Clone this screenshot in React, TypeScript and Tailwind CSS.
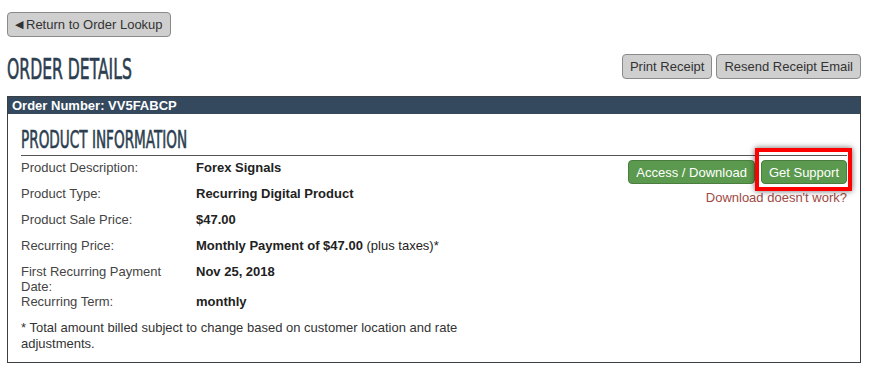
import React from 'react'

const rows: { label: string; value: React.ReactNode; tight?: boolean }[] = [
  { label: 'Product Description:', value: <b>Forex Signals</b> },
  { label: 'Product Type:', value: <b>Recurring Digital Product</b> },
  { label: 'Product Sale Price:', value: <b>$47.00</b> },
  {
    label: 'Recurring Price:',
    value: (
      <>
        <b>Monthly Payment of $47.00</b> (plus taxes)*
      </>
    ),
  },
  { label: 'First Recurring Payment Date:', value: <b>Nov 25, 2018</b>, tight: true },
  { label: 'Recurring Term:', value: <b>monthly</b> },
]

const grayBtn =
  'h-[25px] px-[7px] rounded-[4px] border border-[#8a8a8a] bg-[#cfcfcf] text-[#333] text-[13px] leading-none'
const greenBtn =
  'h-[24px] px-[7px] rounded-[4px] border border-[#4a7d3f] bg-[#5b9a4e] text-white text-[13px] leading-none'

// condensed heading look (Oswald-ish)
const heading =
  "font-['DejaVu_Sans_Condensed','DejaVu_Sans',sans-serif] text-[#2c3e50] origin-left whitespace-nowrap [-webkit-text-stroke:0.6px_#2c3e50]"

export default function App() {
  return (
    <div className="w-[869px] h-[371px] bg-white px-[7px] pt-[12px] font-['Liberation_Sans',Arial,sans-serif] text-[13px] text-[#333]">
      <button className={`${grayBtn} flex items-center gap-[3px]`}>
        <span className="text-[11px]">◀</span>Return to Order Lookup
      </button>

      <div className="flex items-end justify-between mt-[17px] pr-[1px]">
        <h1 className={`${heading} text-[28px] leading-[28px] scale-x-[0.62]`}>ORDER DETAILS</h1>
        <div className="flex gap-[4px] mb-[5px]">
          <button className={grayBtn}>Print Receipt</button>
          <button className={grayBtn}>Resend Receipt Email</button>
        </div>
      </div>

      <div className="mt-[12px] w-[854px] border border-[#3a3f44]">
        <div className="h-[17px] bg-[#34495e] text-white font-bold text-[13px] leading-[17px] pl-[4px]">
          Order Number: VV5FABCP
        </div>
        <div className="px-[13px] pt-[14px] pb-[10px]">
          <h2 className={`${heading} text-[24px] leading-[24px] scale-x-[0.63]`}>PRODUCT INFORMATION</h2>
          <div className="mt-[3px] border-t border-[#555]" />

          <div className="relative pt-[4px]">
            <div className="absolute right-0 top-[4px] flex flex-col items-end">
              <div className="flex gap-[6px]">
                <button className={greenBtn}>Access / Download</button>
                <div className="relative">
                  <button className={greenBtn}>Get Support</button>
                  <div className="absolute left-[-6px] top-[-12px] w-[97px] h-[43px] border-[4px] border-[#ff0000] shadow-[0_0_6px_rgba(0,0,0,0.6)] pointer-events-none" />
                </div>
              </div>
              <a className="mt-[6px] text-[#a04a44] leading-[15px]">Download doesn't work?</a>
            </div>

            {rows.map((r) => (
              <div key={r.label} className={`flex leading-[15px] ${r.tight ? '' : 'mb-[11px]'}`}>
                <div className="w-[175px] shrink-0 pr-[10px] text-[#444]">{r.label}</div>
                <div className="text-[#222]">{r.value}</div>
              </div>
            ))}

            <p className="w-[445px] leading-[16px] text-[#333]">
              * Total amount billed subject to change based on customer location and rate adjustments.
            </p>
          </div>
        </div>
      </div>
    </div>
  )
}
